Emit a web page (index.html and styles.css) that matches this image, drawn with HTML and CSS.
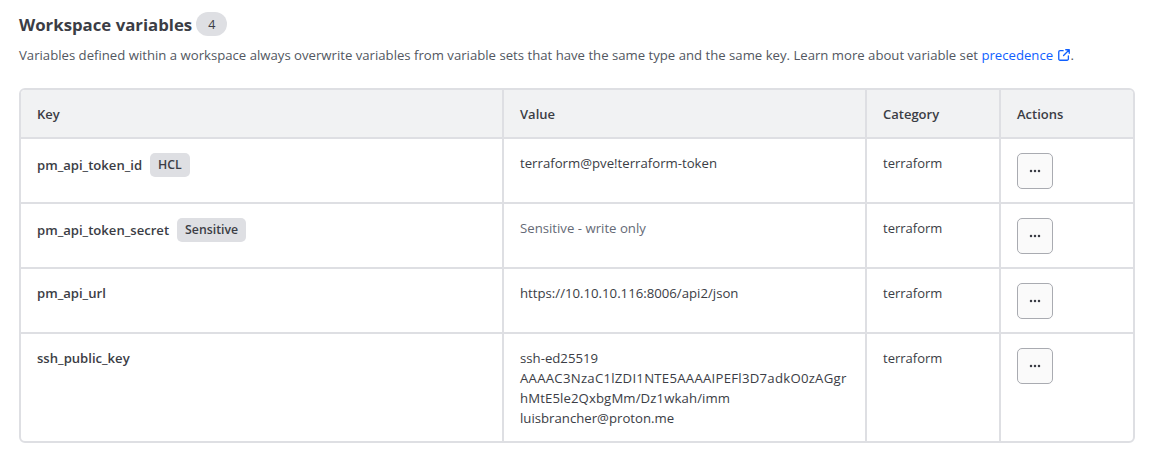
FILE: index.html
```html
<!DOCTYPE html>
<html lang="en">
<head>
<meta charset="utf-8">
<title>Workspace variables</title>
<link rel="stylesheet" href="styles.css">
</head>
<body>
<section class="page">
  <div class="title-row">
    <h2 class="title">Workspace variables</h2>
    <span class="count">4</span>
  </div>
  <p class="desc">Variables defined within a workspace always overwrite variables from variable sets that have the same type and the same key. Learn more about variable set <a class="link" href="#">precedence <svg class="ext" viewBox="0 0 16 16" width="14" height="14" fill="none" stroke="currentColor" stroke-width="1.5" stroke-linecap="round" stroke-linejoin="round"><path d="M7 3H3.500A1.500 1.500 0 0 0 2 4.500v8A1.500 1.500 0 0 0 3.500 14h8a1.500 1.500 0 0 0 1.500-1.500V9"/><path d="M10 2h4v4M14 2 7.500 8.500"/></svg></a>.</p>
  <div class="table-wrap">
    <table class="vars">
      <colgroup><col class="c1"><col class="c2"><col class="c3"><col class="c4"></colgroup>
      <thead>
        <tr><th>Key</th><th>Value</th><th>Category</th><th>Actions</th></tr>
      </thead>
      <tbody>
        <tr>
          <td><div class="key-line"><span class="key">pm_api_token_id</span><span class="tag">HCL</span></div></td>
          <td class="value">terraform@pve!terraform-token</td>
          <td>terraform</td>
          <td><button class="more" aria-label="Actions"><svg viewBox="0 0 12 4" width="12" height="4" fill="currentColor"><circle cx="2" cy="2" r="1.250"/><circle cx="6" cy="2" r="1.250"/><circle cx="10" cy="2" r="1.250"/></svg></button></td>
        </tr>
        <tr>
          <td><div class="key-line"><span class="key">pm_api_token_secret</span><span class="tag">Sensitive</span></div></td>
          <td class="value muted">Sensitive - write only</td>
          <td>terraform</td>
          <td><button class="more" aria-label="Actions"><svg viewBox="0 0 12 4" width="12" height="4" fill="currentColor"><circle cx="2" cy="2" r="1.250"/><circle cx="6" cy="2" r="1.250"/><circle cx="10" cy="2" r="1.250"/></svg></button></td>
        </tr>
        <tr>
          <td><div class="key-line"><span class="key">pm_api_url</span></div></td>
          <td class="value">https://10.10.10.116:8006/api2/json</td>
          <td>terraform</td>
          <td><button class="more" aria-label="Actions"><svg viewBox="0 0 12 4" width="12" height="4" fill="currentColor"><circle cx="2" cy="2" r="1.250"/><circle cx="6" cy="2" r="1.250"/><circle cx="10" cy="2" r="1.250"/></svg></button></td>
        </tr>
        <tr>
          <td><div class="key-line"><span class="key">ssh_public_key</span></div></td>
          <td class="value">ssh-ed25519<br><span class="wide">AAAAC3NzaC1lZDI1NTE5AAAAIPEFl3D7adkO0zAGgr</span><br><span class="wide-sm">hMtE5le2QxbgMm/Dz1wkah/imm</span><br>luisbrancher@proton.me</td>
          <td>terraform</td>
          <td><button class="more" aria-label="Actions"><svg viewBox="0 0 12 4" width="12" height="4" fill="currentColor"><circle cx="2" cy="2" r="1.250"/><circle cx="6" cy="2" r="1.250"/><circle cx="10" cy="2" r="1.250"/></svg></button></td>
        </tr>
      </tbody>
    </table>
  </div>
</section>
</body>
</html>
```
FILE: styles.css
```css
* { box-sizing: border-box; }
html, body { margin: 0; background: #fff; }
body {
  font-family: "Open Sans", "Noto Sans", sans-serif;
  color: #3b3d45;
  font-size: 13px;
}
.page { padding: 12px 30px 0 19px; }
.title-row { display: flex; align-items: center; gap: 4px; height: 24px; }
.title { margin: 0; padding-top: 2px; font-size: 16.800px; font-weight: 700; line-height: 24px; color: #3b3d45; }
.count {
  display: flex; align-items: center; justify-content: center;
  width: 31px; height: 24px; border-radius: 12px;
  background: #dedfe3; font-size: 12.500px;
}
.desc { margin: 9px 0 0; line-height: 20px; font-size: 13.160px; color: #525761; white-space: nowrap; }
.link { color: #1060ff; text-decoration: none; }
.ext { vertical-align: -2px; }
.table-wrap {
  margin-top: 23px; width: 1116px; height: 355px;
  border: 2px solid #dedfe3; border-radius: 6px; overflow: hidden;
}
.vars { width: 100%; height: 100%; table-layout: fixed; border-collapse: collapse; }
.c1 { width: 482px; }
.c2 { width: 363px; }
.c3 { width: 134px; }
.vars th, .vars td { padding: 0 16px; border-left: 2px solid #dedfe3; text-align: left; vertical-align: top; }
.vars th:first-child, .vars td:first-child { border-left: 0; }
.vars th {
  height: 48px; background: #f1f2f3; border-bottom: 2px solid #dedfe3;
  font-weight: 600; color: #3b3d45; line-height: 20px; vertical-align: middle;
}
.vars td { height: 65px; padding-top: 14px; padding-bottom: 10px; line-height: 20px; border-bottom: 2px solid #dedfe3; color: #3b3d45; }
.vars tr:last-child td { height: 110px; border-bottom: 0; }
.vars td.value { font-size: 13.200px; }
.vars td.muted { color: #656a76; }
.wide { letter-spacing: 0.250px; }
.wide-sm { letter-spacing: 0.100px; }
.key-line { display: flex; align-items: center; gap: 8px; }
.key { font-weight: 600; font-size: 13.100px; }
.tag {
  padding: 0 8px; height: 24px; line-height: 24px;
  border-radius: 5px; background: #dedfe3; font-size: 12.300px; font-weight: 600;
}
.more {
  display: flex; align-items: center; justify-content: center;
  width: 36px; height: 36px; margin: 0; padding: 0;
  border: 1px solid #a9abb1; border-radius: 5px; background: #fafafa; color: #3b3d45;
}
```
